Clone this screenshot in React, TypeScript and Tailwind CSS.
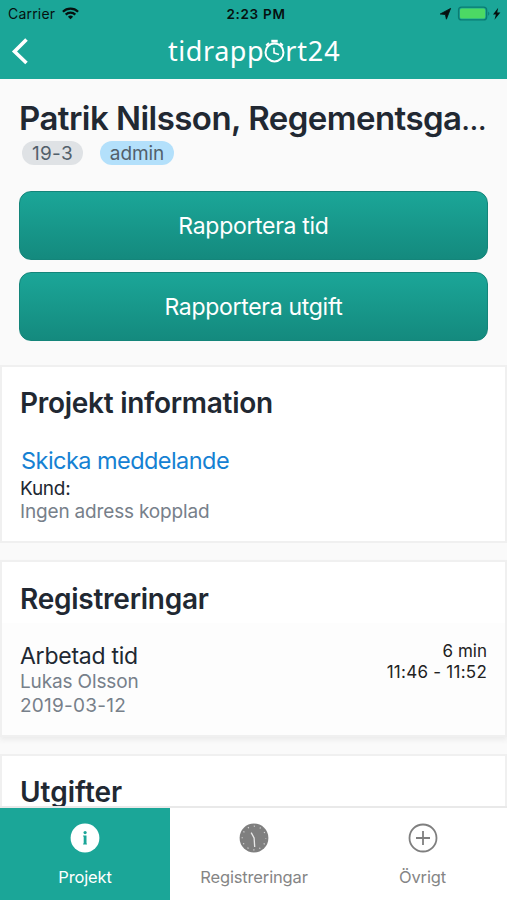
const tabs = [
  { label: "Projekt", icon: <InfoIcon />, active: true },
  { label: "Registreringar", icon: <ClockIcon />, active: false },
  { label: "Övrigt", icon: <PlusIcon />, active: false },
];

function WifiIcon() {
  return (
    <svg className="h-[13px] w-[17px]" viewBox="0 0 17 13" fill="none" stroke="#06110f" strokeWidth="2.2">
      <path d="M.9 4.7a10.8 10.8 0 0 1 15.2 0" />
      <path d="M3.7 7.6a6.8 6.8 0 0 1 9.6 0" />
      <path d="M8.5 12.3 5.9 9.7a3.7 3.7 0 0 1 5.2 0Z" fill="#06110f" stroke="none" />
    </svg>
  );
}

function StatusIcons() {
  return (
    <svg className="h-[16px] w-[64px]" viewBox="0 0 64 16">
      <path d="M12.6 2.4 8.4 13.2 7.4 8.6 2.2 8Z" fill="#06110f" stroke="#06110f" strokeWidth=".8" />
      <rect x="20.6" y="1.1" width="28" height="12.8" rx="3" fill="none" stroke="#0b7c72" strokeWidth="1.4" />
      <rect x="22" y="2.5" width="25.2" height="10" rx="1.6" fill="#4cd964" />
      <path d="M50.2 5.4q2.4 2.1 0 4.4Z" fill="#0b7c72" />
      <path d="M60.2 1.8 55 8.6h2.9l-1.4 5.2 5.9-7.4h-3.2Z" fill="#06110f" />
    </svg>
  );
}

function StopwatchIcon() {
  return (
    <svg className="mt-[1px] h-[24px] w-[21px]" viewBox="0 0 21 24" fill="none" stroke="#fff">
      <circle cx="10.5" cy="13.4" r="9" strokeWidth="2" />
      <path d="M7.3 2.2h6.4" strokeWidth="2.8" />
      <path d="M2.2 6.6 5 4M18.8 6.6 16 4" strokeWidth="2" />
      <path d="M10 8.8v5.2l5 1.4" strokeWidth="1.6" />
    </svg>
  );
}

function InfoIcon() {
  return (
    <svg className="size-[30px]" viewBox="0 0 30 30">
      <circle cx="15" cy="15" r="14.4" fill="#fff" />
      <path d="M13.5 12.4h3v8.1h.4v1h-3.8v-1h.6v-7.1h-.6v-1Z" fill="#1ba698" />
      <circle cx="15.1" cy="9.6" r="1.6" fill="#1ba698" />
    </svg>
  );
}

function ClockIcon() {
  return (
    <svg className="size-[30px]" viewBox="0 0 30 30" fill="none">
      <circle cx="15" cy="15" r="14.4" fill="#7f7f7f" />
      <circle cx="15" cy="15" r="11.8" stroke="#d5d5d5" strokeWidth="1.2" strokeDasharray="1.2 4.98" strokeDashoffset=".6" />
      <path d="m12.2 9.6 2.9 5.4.6 9" stroke="#e8e8e8" strokeWidth="1.3" />
    </svg>
  );
}

function PlusIcon() {
  return (
    <svg className="size-[30px]" viewBox="0 0 30 30" fill="none" stroke="#7f7f7f" strokeWidth="1.8">
      <circle cx="15" cy="15" r="13.5" />
      <path d="M15 8v14M8 15h14" />
    </svg>
  );
}

export default function App() {
  return (
    <div className="flex h-[900px] w-[507px] flex-col overflow-hidden bg-[#fafafa] font-['Inter','Liberation_Sans',sans-serif] text-[#212832]">
      <header className="h-[79px] shrink-0 bg-[#1ba698] text-[#06110f]">
        <div className="grid h-[27px] grid-cols-3 items-center pl-2 pr-[5px] text-[13px]">
          <div className="flex items-center gap-[7px]">
            <span className="text-[14px] tracking-[0.2px]">Carrier</span>
            <WifiIcon />
          </div>
          <span className="pl-[2px] pt-px text-center text-[13.5px] font-semibold tracking-[0.7px]">2:23 PM</span>
          <div className="flex justify-end">
            <StatusIcons />
          </div>
        </div>
        <div className="flex h-[48px] items-center text-white">
          <svg className="ml-[11px] h-[28px] w-[18px]" viewBox="0 0 18 28" fill="none" stroke="#fff" strokeWidth="3.6">
            <path d="M15.5 2.5 3.5 14.5l12 11.5" />
          </svg>
          <div className="-mt-[2px] ml-[139px] flex items-center font-['Noto_Sans',sans-serif] text-[27px] leading-none">
            <span className="tracking-[0.55px]">tidrapp</span>
            <StopwatchIcon />
            <span className="tracking-[0.9px]">rt24</span>
          </div>
        </div>
      </header>

      <main className="min-h-0 flex-1 overflow-hidden">
        <section className="px-5 pt-[20px]">
          <h1 className="-ml-px text-[33px] leading-[38px] font-semibold tracking-[-0.54px] whitespace-nowrap">
            Patrik Nilsson, Regementsga<span className="text-[26px] leading-none tracking-normal">…</span>
          </h1>
          <div className="mt-[4px] flex gap-[17px] pl-[2px] text-[19px] text-[#52606b]">
            <span className="flex h-6 w-[61px] items-center justify-center rounded-full bg-[#dfe2e5] pt-[2px] tracking-[0.3px]">
              19-3
            </span>
            <span className="flex h-6 w-[74px] items-center justify-center rounded-full bg-[#b3e0fb] pt-[2px] tracking-[-0.1px]">
              admin
            </span>
          </div>
          <div className="-mx-px mt-[26px] flex flex-col gap-3 text-[23px] tracking-[-0.3px] text-white">
            <button className="h-[69px] rounded-xl border border-[#14857a] bg-linear-to-b from-[#1ba698] to-[#148a7e] pt-[2px]">
              Rapportera tid
            </button>
            <button className="h-[69px] rounded-xl border border-[#14857a] bg-linear-to-b from-[#1ba698] to-[#148a7e] pt-px">
              Rapportera utgift
            </button>
          </div>
        </section>

        <section className="mt-6 h-[178px] border-2 border-[#f0f0f0] bg-white px-[18px] pt-[17px]">
          <h2 className="text-[28px] leading-[38px] font-semibold tracking-[-0.28px]">Projekt information</h2>
          <a className="mt-[23px] block pl-px text-[23.5px] leading-[32px] tracking-[-0.55px] text-[#1581d3]">
            Skicka meddelande
          </a>
          <p className="text-[19px] leading-[23px] tracking-[-0.25px]">Kund:</p>
          <p className="text-[19px] leading-[23px] tracking-[-0.17px] text-[#77808a]">Ingen adress kopplad</p>
        </section>

        <section className="mt-[17px] h-[177px] border-2 border-[#f0f0f0] bg-[#fdfdfd] shadow-[0_3px_5px_#ececec]">
          <div className="h-[61px] bg-white px-[18px] pt-[18px]">
            <h2 className="text-[28px] leading-[38px] font-semibold tracking-[-0.25px]">Registreringar</h2>
          </div>
          <div className="flex justify-between px-[18px] pt-[18px]">
            <div>
              <p className="text-[23px] leading-[30px] tracking-[-0.25px]">Arbetad tid</p>
              <p className="-mt-px text-[19px] leading-[24px] tracking-[-0.15px] text-[#77808a]">Lukas Olsson</p>
              <p className="text-[19px] leading-[24px] tracking-[0.25px] text-[#77808a]">2019-03-12</p>
            </div>
            <div className="text-right text-[17px] leading-[21px] text-[#222]">
              <p>6 min</p>
              <p className="tracking-[0.25px]">11:46 - 11:52</p>
            </div>
          </div>
        </section>

        <section className="mt-[17px] h-[177px] border-2 border-[#f0f0f0] bg-white px-[18px] pt-[17px]">
          <h2 className="text-[28px] leading-[38px] font-semibold tracking-[0px]">Utgifter</h2>
        </section>
      </main>

      <nav className="grid h-[94px] shrink-0 grid-cols-[170px_168px_169px] border-t-2 border-[#e9e9e9] bg-white">
        {tabs.map((tab) => (
          <a
            key={tab.label}
            className={`flex flex-col items-center pt-[15px] text-[16.5px] tracking-[-0.15px] ${
              tab.active ? "bg-[#1ba698] text-white" : "text-[#858585]"
            }`}
          >
            {tab.icon}
            <span className="mt-[12px]">{tab.label}</span>
          </a>
        ))}
      </nav>
    </div>
  );
}
